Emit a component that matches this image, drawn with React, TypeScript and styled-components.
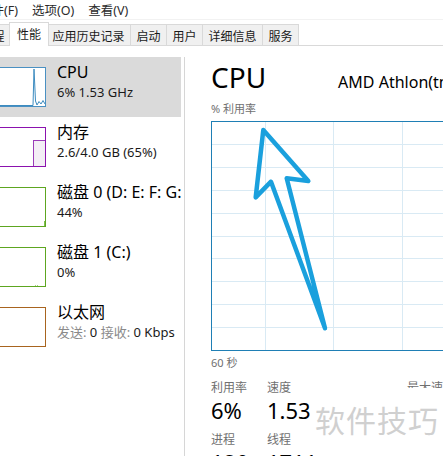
import React from "react";
import styled, { createGlobalStyle } from "styled-components";

const GlobalStyle = createGlobalStyle`
  html, body { margin: 0; padding: 0; background: #fff; }
  body {
    width: 443px; height: 456px; overflow: hidden;
    font-family: "Noto Sans", "Noto Sans CJK SC", sans-serif;
  }
`;

const Window = styled.div`
  position: relative;
  width: 443px;
  height: 456px;
  overflow: hidden;
  background: #fff;
  color: #000;
`;

const MenuBar = styled.div`
  display: flex;
  gap: 14px;
  height: 19px;
  align-items: center;
  margin-left: -21px;
  font-size: 12.5px;
  color: #2b2b2b;
  border-bottom: 1px solid #f2f2f2;
  white-space: nowrap;
`;

const MenuItem = styled.span``;

const TabStrip = styled.div`
  display: flex;
  align-items: flex-end;
  height: 25px;
  margin-left: -25px;
  border-bottom: 1px solid #d9d9d9;
  white-space: nowrap;
`;

const Tab = styled.div<{ $active?: boolean }>`
  display: flex;
  align-items: center;
  box-sizing: border-box;
  height: ${(p) => (p.$active ? "24px" : "21px")};
  padding: ${(p) => (p.$active ? "0 7px 1px" : "1px 5.5px 0")};
  margin: ${(p) => (p.$active ? "0 -2px -1px -2px" : "0 0 0 -1px")};
  position: relative;
  z-index: ${(p) => (p.$active ? 1 : 0)};
  background: ${(p) => (p.$active ? "#fff" : "#f0f0f0")};
  border: 1px solid #d9d9d9;
  border-bottom: none;
  font-size: 12px;
  color: #1a1a1a;
`;

const Content = styled.div`
  display: flex;
  height: 410px;
`;

const Sidebar = styled.div`
  width: 185px;
  flex-shrink: 0;
  box-sizing: border-box;
  border-right: 1px solid #d6d6d6;
  margin-top: 11px;
  overflow: hidden;
`;

const Row = styled.div<{ $selected?: boolean }>`
  display: flex;
  align-items: flex-start;
  width: 181px;
  height: 60px;
  background: ${(p) => (p.$selected ? "#dadada" : "transparent")};
  white-space: nowrap;
  overflow: hidden;
`;

const Thumb = styled.div<{ $color: string }>`
  width: 60px;
  height: 40px;
  margin-left: -14px;
  margin-top: 10px;
  box-sizing: border-box;
  border: 1px solid ${(p) => p.$color};
  background: #fff;
  flex-shrink: 0;
  position: relative;
  svg { display: block; }
`;

const RowText = styled.div`
  margin-left: 11px;
  padding-top: 5px;
`;

const RowTitle = styled.div`
  font-size: 16px;
  line-height: 20px;
  color: #000;
`;

const RowSub = styled.div`
  font-size: 13px;
  line-height: 17px;
  margin-top: 2px;
  color: #1a1a1a;
`;

const Muted = styled.span`
  color: #8a8a8a;
`;

const Main = styled.div`
  flex: 1;
  min-width: 0;
  padding-left: 26px;
  padding-top: 14px;
  white-space: nowrap;
`;

const TitleRow = styled.div`
  display: flex;
  align-items: baseline;
  gap: 72px;
`;

const BigTitle = styled.div`
  font-size: 28px;
  line-height: 34px;
  font-weight: 400;
`;

const CpuName = styled.div`
  font-size: 16px;
`;

const Caption = styled.div<{ $mt: number }>`
  font-size: 11px;
  line-height: 15px;
  color: #707070;
  margin-top: ${(p) => p.$mt}px;
`;

const ChartBox = styled.div`
  position: relative;
  width: 300px;
  height: 230px;
  margin-top: 5px;
  svg { display: block; }
`;

const ArrowLayer = styled.svg`
  position: absolute;
  left: 0;
  top: 0;
  overflow: visible;
`;

const Stats = styled.div`
  display: grid;
  grid-template-columns: 56px 56px 84px auto;
  margin-top: 10px;
`;

const StatLabel = styled.div<{ $mt?: number }>`
  font-size: 12px;
  line-height: 16px;
  color: #707070;
  margin-top: ${(p) => p.$mt ?? 0}px;
`;

const StatValue = styled.div`
  font-size: 22px;
  line-height: 28px;
  color: #000;
`;

const Watermark = styled.div`
  position: absolute;
  left: 313px;
  top: 388px;
  padding: 14px 6px 20px 2px;
  background: #fff;
  font-family: "Noto Sans CJK SC", sans-serif;
  font-size: 30px;
  line-height: 34px;
  letter-spacing: 1px;
  white-space: nowrap;
  color: #d0d0d0;
`;

const gridH = Array.from({ length: 9 }, (_, i) => Math.round((i + 1) * 22.9) + 0.5);
const gridV = [54.5, 122.5, 191.5, 259.5];

function CpuChart() {
  return (
    <svg width={300} height={230}>
      {gridH.map((y) => (
        <line key={"h" + y} x1={0} x2={300} y1={y} y2={y} stroke="#d9eaf4" strokeWidth={1} />
      ))}
      {gridV.map((x) => (
        <line key={"v" + x} x1={x} x2={x} y1={0} y2={230} stroke="#d9eaf4" strokeWidth={1} />
      ))}
      <rect x={0.5} y={0.5} width={320} height={229} fill="none" stroke="#1f7fb5" strokeWidth={1} />
    </svg>
  );
}

export default function App() {
  return (
    <Window>
      <GlobalStyle />
      <MenuBar>
        <MenuItem>文件(F)</MenuItem>
        <MenuItem>选项(O)</MenuItem>
        <MenuItem>查看(V)</MenuItem>
      </MenuBar>
      <TabStrip>
        <Tab>进程</Tab>
        <Tab $active>性能</Tab>
        <Tab>应用历史记录</Tab>
        <Tab>启动</Tab>
        <Tab>用户</Tab>
        <Tab>详细信息</Tab>
        <Tab>服务</Tab>
      </TabStrip>
      <Content>
        <Sidebar>
          <Row $selected>
            <Thumb $color="#4a90c2">
              <svg width={58} height={38}>
                <polyline
                  points="0,37.5 46,37.5 47,1 48.5,33 50,37 52,33.5 54,36 56,32.5 58,36"
                  fill="none"
                  stroke="#3d8cc0"
                  strokeWidth={1}
                />
              </svg>
            </Thumb>
            <RowText>
              <RowTitle>CPU</RowTitle>
              <RowSub>6% 1.53 GHz</RowSub>
            </RowText>
          </Row>
          <Row>
            <Thumb $color="#8b12ae">
              <svg width={58} height={38}>
                <rect x={46.5} y={12.5} width={12} height={26} fill="#f3eef5" stroke="#9a3cb8" strokeWidth={1} />
              </svg>
            </Thumb>
            <RowText>
              <RowTitle>内存</RowTitle>
              <RowSub>2.6/4.0 GB (65%)</RowSub>
            </RowText>
          </Row>
          <Row>
            <Thumb $color="#5da620">
              <svg width={58} height={38}>
                <line x1={57.5} y1={33} x2={57.5} y2={38} stroke="#7fbf4e" strokeWidth={1} />
              </svg>
            </Thumb>
            <RowText>
              <RowTitle>磁盘 0 (D: E: F: G:)</RowTitle>
              <RowSub>44%</RowSub>
            </RowText>
          </Row>
          <Row>
            <Thumb $color="#5da620">
              <svg width={58} height={38}>
                <line x1={48} y1={37.5} x2={52} y2={37.5} stroke="#a9d48a" strokeWidth={1} strokeDasharray="1 1" />
              </svg>
            </Thumb>
            <RowText>
              <RowTitle>磁盘 1 (C:)</RowTitle>
              <RowSub>0%</RowSub>
            </RowText>
          </Row>
          <Row>
            <Thumb $color="#a8641f" />
            <RowText>
              <RowTitle>以太网</RowTitle>
              <RowSub>
                <Muted>发送:</Muted> 0 <Muted>接收:</Muted> 0 Kbps
              </RowSub>
            </RowText>
          </Row>
        </Sidebar>
        <Main>
          <TitleRow>
            <BigTitle>CPU</BigTitle>
            <CpuName>AMD Athlon(tm) II X2 250 Processor</CpuName>
          </TitleRow>
          <Caption $mt={7}>% 利用率</Caption>
          <ChartBox>
            <CpuChart />
            <ArrowLayer width={300} height={230}>
              <polygon
                points="52.3,9 97.3,60 75.7,57.3 114,207.3 60,60.7 44.7,76.3"
                fill="none"
                stroke="#1aa0dd"
                strokeWidth={4.5}
                strokeLinejoin="round"
                strokeLinecap="round"
              />
            </ArrowLayer>
          </ChartBox>
          <Caption $mt={4}>60 秒</Caption>
          <Stats>
            <StatLabel>利用率</StatLabel>
            <StatLabel>速度</StatLabel>
            <span />
            <StatLabel>最大速度:</StatLabel>
            <StatValue>6%</StatValue>
            <StatValue>1.53 GHz</StatValue>
            <span />
            <span />
            <StatLabel $mt={8}>进程</StatLabel>
            <StatLabel $mt={8}>线程</StatLabel>
            <span />
            <span />
            <StatValue>120</StatValue>
            <StatValue>1711</StatValue>
          </Stats>
        </Main>
      </Content>
      <Watermark>软件技巧</Watermark>
    </Window>
  );
}
